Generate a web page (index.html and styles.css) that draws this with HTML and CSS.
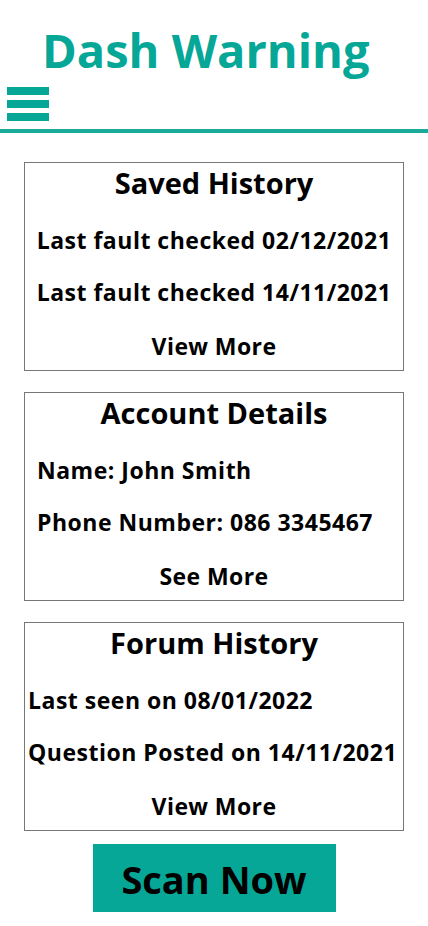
FILE: index.html
```html
<!DOCTYPE html>
<html lang="en">
<head>
    <meta charset="UTF-8">
    <meta name="viewport" content="width=device-width, initial-scale=1.0">
    <title>Dash Warning</title>
    <link rel="stylesheet" href="styles.css">
</head>
<body>
    <div class="header">
        <h1>Dash Warning</h1>
        <div class="menu-icon">
            <span></span>
            <span></span>
            <span></span>
        </div>
    </div>
    <hr class="divider">

    <div class="cards">
        <div class="card">
            <h2>Saved History</h2>
            <p class="row center">Last fault checked 02/12/2021</p>
            <p class="row center">Last fault checked 14/11/2021</p>
            <p class="more">View More</p>
        </div>
        <div class="card">
            <h2>Account Details</h2>
            <p class="row left">Name: John Smith</p>
            <p class="row left">Phone Number: 086 3345467</p>
            <p class="more">See More</p>
        </div>
        <div class="card">
            <h2>Forum History</h2>
            <p class="row tight">Last seen on 08/01/2022</p>
            <p class="row tight">Question Posted on 14/11/2021</p>
            <p class="more">View More</p>
        </div>
    </div>

    <div class="scan">
        <button id="btnScan">Scan Now</button>
    </div>
</body>
</html>
```

FILE: styles.css
```css
body {
    margin: 0;
    padding: 0;
    font-family: "Open Sans", Arial, sans-serif;
    font-weight: bold;
    background-color: white;
    color: black;
}

.header h1 {
    margin: 20px 0 0 0;
    padding-left: 42px;
    font-size: 47px;
    line-height: 60px;
    color: #06a797;
}

.menu-icon {
    display: flex;
    flex-direction: column;
    gap: 5px;
    width: 42px;
    margin: 7px 0 0 7px;
}

.menu-icon span {
    display: block;
    height: 8px;
    background-color: #06a797;
}

.divider {
    margin: 8px 0 0 0;
    border: none;
    height: 4px;
    background-color: #1aab9c;
}

.cards {
    display: flex;
    flex-direction: column;
    gap: 21px;
    margin: 29px 24px 0 24px;
}

.card {
    box-sizing: border-box;
    border: 1px solid #777;
    padding-top: 2px;
    height: 209px;
    overflow: hidden;
}

.card h2 {
    margin: 0 0 13px 0;
    font-size: 29px;
    line-height: 36px;
    text-align: center;
}

.row {
    margin: 0;
    font-size: 23px;
    letter-spacing: 0.5px;
    line-height: 52px;
    white-space: nowrap;
}

.row.center {
    text-align: center;
}

.row.left {
    padding-left: 12px;
}

.row.tight {
    padding-left: 3px;
}

.more {
    margin: 4px 0 0 0;
    font-size: 23px;
    letter-spacing: 0.4px;
    line-height: 48px;
    text-align: center;
}

.scan {
    display: flex;
    justify-content: center;
    margin-top: 13px;
}

#btnScan {
    width: 243px;
    height: 68px;
    border: none;
    background-color: #06a797;
    color: black;
    font-family: "Open Sans", Arial, sans-serif;
    font-weight: bold;
    font-size: 38px;
    padding: 2px 0 0 0;
}
```
